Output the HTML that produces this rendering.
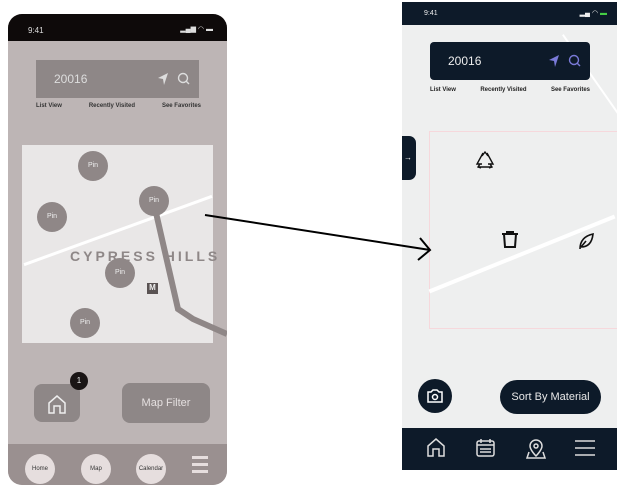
<!DOCTYPE html>
<html><head><style>
*{margin:0;padding:0;box-sizing:border-box}
body{width:619px;height:489px;background:#fff;position:relative;overflow:hidden;font-family:"Liberation Sans",sans-serif}
.a{position:absolute}
.lp{left:8px;top:14px;width:219px;height:471px;border-radius:14px;overflow:hidden;background:#bdb5b5}
.rp{left:402px;top:2px;width:215px;height:468px;overflow:hidden;background:#eeefef}
.pin{position:absolute;width:30px;height:30px;border-radius:50%;background:#8f8787;color:#eee;font-size:7px;text-align:center;line-height:30px}
.nc{position:absolute;top:10px;width:30px;height:30px;border-radius:50%;background:#e6dede;color:#333;font-size:6px;text-align:center;line-height:30px}
</style></head><body>
<div class="a lp">
 <div class="a" style="left:0;top:0;width:219px;height:27px;background:#0e0a0a;color:#ddd;font-size:8px;padding:12px 0 0 20px">9:41<span style="position:absolute;right:14px;top:11px;font-size:7px">▂▄▆ ◠ ▬</span></div>
 <div class="a" style="left:28px;top:46px;width:163px;height:38px;background:#8e8787;color:#ddd;font-size:12px;padding:12px 0 0 18px">20016
  <svg class="a" style="right:8px;top:12px" width="34" height="14"><path d="M11 1L1 6l5 1 1 6z" fill="#ddd"/><circle cx="26" cy="6" r="4.5" fill="none" stroke="#ddd" stroke-width="1.4"/><path d="M29 9l3 3" stroke="#ddd" stroke-width="1.4"/></svg></div>
 <div class="a" style="left:28px;top:89px;width:165px;font-size:6px;font-weight:bold;color:#333;display:flex;justify-content:space-between"><span>List View</span><span>Recently Visited</span><span>See Favorites</span></div>
 <div class="a" style="left:14px;top:131px;width:191px;height:198px;background:#e9e7e7"></div>
 <div class="a" style="left:10px;top:215px;width:200px;height:3px;background:#fff;transform:rotate(-20deg)"></div>
 <div class="a" style="left:62px;top:234px;font-size:14px;font-weight:bold;letter-spacing:3px;color:#8e8787;white-space:nowrap">CYPRESS HILLS</div>
 <svg class="a" style="left:0;top:0" width="219" height="471"><polyline points="146,190 170,295 185,305 219,320" fill="none" stroke="#8f8787" stroke-width="6"/></svg>
 <div class="pin" style="left:70px;top:137px">Pin</div>
 <div class="pin" style="left:131px;top:172px">Pin</div>
 <div class="pin" style="left:29px;top:188px">Pin</div>
 <div class="pin" style="left:97px;top:244px">Pin</div>
 <div class="pin" style="left:62px;top:294px">Pin</div>
 <div class="a" style="left:139px;top:269px;width:11px;height:11px;background:#5a5353;color:#eee;font-size:8px;text-align:center;font-weight:bold">M</div>
 <div class="a" style="left:26px;top:370px;width:46px;height:38px;background:#8e8787;border-radius:8px"><svg width="46" height="38"><path d="M15 29V19l8-7 8 7v10h-5v-7h-6v7z" fill="none" stroke="#eee" stroke-width="1.5"/></svg></div>
 <div class="a" style="left:62px;top:358px;width:18px;height:18px;border-radius:50%;background:#1a1515;color:#eee;font-size:8px;text-align:center;line-height:18px">1</div>
 <div class="a" style="left:114px;top:369px;width:88px;height:40px;background:#8e8787;border-radius:8px;color:#e5e0e0;font-size:11px;text-align:center;line-height:40px">Map Filter</div>
 <div class="a" style="left:0;top:430px;width:219px;height:41px;background:#9a9090">
  <div class="nc" style="left:17px">Home</div><div class="nc" style="left:73px">Map</div><div class="nc" style="left:128px">Calendar</div>
  <div class="a" style="left:184px;top:12px;width:16px;height:3px;background:#e6dede;box-shadow:0 7px #e6dede,0 14px #e6dede"></div>
 </div>
</div>
<div class="a rp">
 <div class="a" style="left:0;top:0;width:215px;height:23px;background:#0d1a29;color:#eee;font-size:7px;padding:8px 0 0 22px">9:41<span style="position:absolute;right:10px;top:7px">▂▄ ◠ <span style="color:#4c4">▬</span></span></div>
 <div class="a" style="left:200px;top:20px;width:2px;height:140px;background:#fff;transform:rotate(-35deg)"></div>
 <div class="a" style="left:28px;top:40px;width:160px;height:38px;background:#0d1a29;border-radius:4px;color:#eee;font-size:12px;padding:12px 0 0 18px">20016
  <svg class="a" style="right:8px;top:12px" width="34" height="14"><path d="M11 1L1 6l5 1 1 6z" fill="#7a7ad8"/><circle cx="26" cy="6" r="4.5" fill="none" stroke="#7a7ad8" stroke-width="1.4"/><path d="M29 9l3 3" stroke="#7a7ad8" stroke-width="1.4"/></svg></div>
 <div class="a" style="left:28px;top:85px;width:160px;font-size:6px;font-weight:bold;color:#222;display:flex;justify-content:space-between"><span>List View</span><span>Recently Visited</span><span>See Favorites</span></div>
 <div class="a" style="left:27px;top:129px;width:190px;height:198px;border:1px solid #f6d8dc"></div>
 <div class="a" style="left:20px;top:250px;width:200px;height:4px;background:#fff;transform:rotate(-22deg)"></div>
 <div class="a" style="left:0;top:134px;width:14px;height:44px;background:#0d1a29;border-radius:0 7px 7px 0;color:#fff;font-size:8px;line-height:44px;padding-left:2px">→</div>
 <svg class="a" style="left:72px;top:148px" width="22" height="22"><path d="M9 3l-6 11h5M13 3l6 11h-5M4 17h14M8 6l3-4 3 4M16 14l2 3-3 1M6 14l-2 3 3 1" fill="none" stroke="#111" stroke-width="1.4"/></svg>
 <svg class="a" style="left:98px;top:228px" width="20" height="20"><path d="M2 4h16M7 4V2h6v2M4 4l1 13h10l1-13" fill="none" stroke="#111" stroke-width="2"/></svg>
 <svg class="a" style="left:175px;top:229px" width="18" height="20"><path d="M3 18c0-8 4-13 13-15-1 9-5 13-12 13M4 16l5-6" fill="none" stroke="#111" stroke-width="1.6"/></svg>
 <div class="a" style="left:16px;top:377px;width:34px;height:34px;border-radius:50%;background:#0d1a29"><svg width="34" height="34"><path d="M10 13h3l2-2h4l2 2h3v10H10z" fill="none" stroke="#fff" stroke-width="1.5"/><circle cx="17" cy="18" r="2.5" fill="none" stroke="#fff" stroke-width="1.5"/></svg></div>
 <div class="a" style="left:98px;top:378px;width:101px;height:34px;border-radius:17px;background:#0d1a29;color:#e8e8e8;font-size:11px;text-align:center;line-height:34px">Sort By Material</div>
 <div class="a" style="left:0;top:426px;width:215px;height:42px;background:#0d1a29">
  <svg width="215" height="42"><g fill="none" stroke="#ddd" stroke-width="1.5">
   <path d="M26 28V18l8-7 8 7v10h-5v-7h-6v7z"/>
   <rect x="75" y="13" width="17" height="15" rx="2"/><path d="M75 17h17M79 11v4M88 11v4M78 21h11M78 24h11"/>
   <path d="M134 12a6 6 0 0 1 6 6c0 4-6 10-6 10s-6-6-6-10a6 6 0 0 1 6-6z"/><circle cx="134" cy="18" r="2"/><path d="M127 24l-2 6h18l-2-6"/>
   <path d="M173 13h20M173 20h20M173 27h20"/></g></svg>
 </div>
</div>
<svg class="a" style="left:0;top:0" width="619" height="489"><path d="M205 215L430 250M420 238L430 250L418 260" fill="none" stroke="#000" stroke-width="2"/></svg>
</body></html>
